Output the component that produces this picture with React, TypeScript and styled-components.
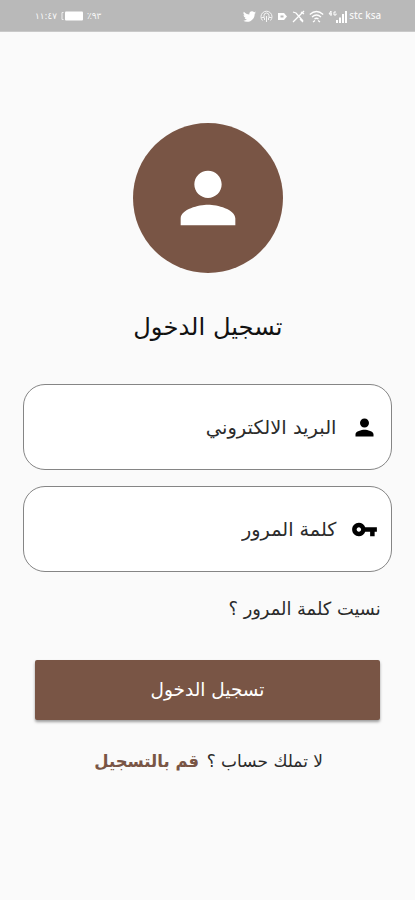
import React from 'react';
import styled, { createGlobalStyle } from 'styled-components';

const Global = createGlobalStyle`
  * { box-sizing: border-box; }
  body { margin: 0; background: #fafafa; font-family: "DejaVu Sans", "Noto Sans", sans-serif; }
`;
const Screen = styled.div`
  height: 900px; background: #fafafa; display: flex; flex-direction: column; overflow: hidden; color: #2b2b2b;
`;
const StatusBar = styled.header`
  direction: ltr; height: 32px; flex: none; background: #b9b9b9; color: #f8f8f8;
  display: flex; justify-content: space-between; align-items: center;
  padding: 1px 34px 0 35px; border-bottom: 1px solid #c9c9c9;
`;
const StatusGroup = styled.div<{ $gap: number }>`
  display: flex; align-items: center; gap: ${p => p.$gap}px; height: 16px;
`;
const StatusText = styled.span<{ $size: number; $latin?: boolean }>`
  font-size: ${p => p.$size}px; line-height: 16px; white-space: nowrap;
  font-family: ${p => (p.$latin ? '"Noto Sans", sans-serif' : 'inherit')};
  font-weight: ${p => (p.$latin ? 500 : 400)};
`;
const Main = styled.main`
  direction: rtl; display: flex; flex-direction: column; padding: 91px 23px 0 23px;
`;
const Avatar = styled.div`
  width: 150px; height: 150px; border-radius: 50%; background: #795545; align-self: center;
  display: flex; align-items: center; justify-content: center;
`;
const Label = styled.span<{ $size: number; $scale?: number; $bold?: boolean; $origin?: string; $color?: string }>`
  display: inline-block; white-space: nowrap; font-size: ${p => p.$size}px; line-height: 1.4;
  font-weight: ${p => (p.$bold ? 700 : 400)}; color: ${p => p.$color ?? 'inherit'};
  transform: scaleX(${p => p.$scale ?? 1}); transform-origin: ${p => p.$origin ?? 'right'} center;
`;
const Title = styled.h1`
  margin: 30px 0 0; height: 50px; display: flex; justify-content: center; align-items: center; font-weight: 400; color: #111;
`;
const Fields = styled.div`margin-top: 31px;`;
const Field = styled.div`
  height: 86px; border: 1px solid #858585; border-radius: 22px; background: #fff;
  display: flex; align-items: center; padding: 0 13px; gap: 15px; margin-bottom: 16px;
`;
const Forgot = styled.div`
  height: 40px; padding-right: 11px; margin-top: 1px; display: flex; align-items: center; justify-content: flex-start;
`;
const Submit = styled.button`
  margin: 31px 12px 0; height: 60px; border: 0; border-radius: 2px; background: #795545; color: #fff;
  font-family: inherit; padding: 0; box-shadow: 0 2px 3px rgba(0,0,0,.38);
  display: flex; align-items: center; justify-content: center;
`;
const Footer = styled.footer`
  height: 40px; margin-top: 22px; padding-right: 69px; display: flex; align-items: center; gap: 8px;
`;

const Person = ({ size, color }: { size: number; color: string }) => (
  <svg width={size} height={size} viewBox="0 0 24 24" fill={color}>
    <path d="M12 12c2.21 0 4-1.79 4-4s-1.79-4-4-4-4 1.79-4 4 1.79 4 4 4zm0 2c-2.67 0-8 1.34-8 4v2h16v-2c0-2.66-5.33-4-8-4z" />
  </svg>
);
const Key = () => (
  <svg width="27" height="27" viewBox="0 0 24 24" fill="#000">
    <path d="M12.65 10C11.83 7.67 9.61 6 7 6c-3.31 0-6 2.69-6 6s2.69 6 6 6c2.61 0 4.83-1.67 5.65-4H17v4h4v-4h2v-4H12.65zM7 14c-1.1 0-2-.9-2-2s.9-2 2-2 2 .9 2 2-.9 2-2 2z" />
  </svg>
);
const Battery = () => (
  <svg width="22" height="10" viewBox="0 0 22 10" fill="#fff">
    <path d="M2.500 1.500H1v7h1.500" fill="none" stroke="#eee" />
    <rect x="4" y="0.500" width="18" height="9" rx="1" />
  </svg>
);
const Bird = () => (
  <svg width="13" height="13" viewBox="0 0 24 24" fill="#fff">
    <path d="M23.95 4.57a10 10 0 0 1-2.82.77 4.960 4.960 0 0 0 2.160-2.720c-.95.550-2 .95-3.130 1.180a4.920 4.920 0 0 0-8.380 4.480C7.690 8.100 4.070 6.130 1.640 3.160a4.920 4.920 0 0 0 1.520 6.570 4.900 4.900 0 0 1-2.230-.61v.06a4.920 4.920 0 0 0 3.950 4.830 5 5 0 0 1-2.210.08 4.940 4.940 0 0 0 4.600 3.420A9.870 9.870 0 0 1 0 19.540a14 14 0 0 0 7.550 2.210c9.050 0 14-7.500 14-13.980 0-.21 0-.42-.02-.63a9.940 9.940 0 0 0 2.460-2.550z" />
  </svg>
);
const Podcast = () => (
  <svg width="13" height="13" viewBox="0 0 13 13" fill="none" stroke="#f5f5f5">
    <path d="M2.500 10.500A5.500 5.500 0 1 1 10.500 10.500M4 7V5.500a2.500 2.500 0 0 1 5 0V7M1.500 7.500h3M8.500 7.500h3M6.500 6v6M4.500 8v2M8.500 8v2" />
  </svg>
);
const Tag = () => (
  <svg width="9" height="9" viewBox="0 0 9 9">
    <path d="M0 1h6l3 3.500L6 8H0z" fill="#fff" /><path d="M2.500 3.500h3v2h-3z" fill="#b9b9b9" />
  </svg>
);
const Tools = () => (
  <svg width="13" height="13" viewBox="0 0 13 13" fill="none" stroke="#fff" strokeWidth="1.300">
    <path d="M1 2l3 1 7 8M12 1L1 12M8 9l3 3M9 2l3 2" />
  </svg>
);
const Wifi = () => (
  <svg width="15" height="13" viewBox="0 0 15 13" fill="none" stroke="#fff" strokeWidth="1.300">
    <path d="M.8 4.500Q7.500-1.500 14.200 4.500M3 7q4.500-4 9 0M5.500 9q2-1.500 4 0M4 12l2-1.500M9 10.500l2 1.500" />
  </svg>
);
const Signal = () => (
  <svg width="20" height="13" viewBox="0 0 20 13" fill="none" stroke="#fff">
    <path d="M3 1L1 4h3M3 1v5M8 2H6v3h2V3.500" />
    <path d="M9 13v-3M12 13V7.500M15 13V4M18 13V1" strokeWidth="2" />
  </svg>
);
const Icons = styled.div`
  display: flex; align-items: center; gap: 4px;
  svg:nth-child(3) { margin: 0 1px; }
`;

export default function App() {
  return (
    <>
      <Global />
      <Screen>
        <StatusBar>
          <StatusGroup $gap={4}>
            <StatusText $size={8.8}>١١:٤٧</StatusText>
            <Battery />
            <StatusText $size={9}>٪٩٣</StatusText>
          </StatusGroup>
          <StatusGroup $gap={1}>
            <Icons><Bird /><Podcast /><Tag /><Tools /><Wifi /><Signal /></Icons>
            <StatusText $size={9.8} $latin>stc ksa</StatusText>
          </StatusGroup>
        </StatusBar>
        <Main>
          <Avatar><Person size={82} color="#fff" /></Avatar>
          <Title><Label $size={24} $scale={1.01} $origin="center">تسجيل الدخول</Label></Title>
          <Fields>
            <Field><Person size={27} color="#000" /><Label $size={19} $scale={1.025}>البريد الالكتروني</Label></Field>
            <Field><Key /><Label $size={19} $scale={1.01}>كلمة المرور</Label></Field>
          </Fields>
          <Forgot><Label $size={18} $scale={0.99}>نسيت كلمة المرور ؟</Label></Forgot>
          <Submit><Label $size={18.5} $origin="center">تسجيل الدخول</Label></Submit>
          <Footer>
            <Label $size={17}>لا تملك حساب ؟</Label>
            <Label $size={17} $scale={0.97} $bold $color="#795545">قم بالتسجيل</Label>
          </Footer>
        </Main>
      </Screen>
    </>
  );
}
